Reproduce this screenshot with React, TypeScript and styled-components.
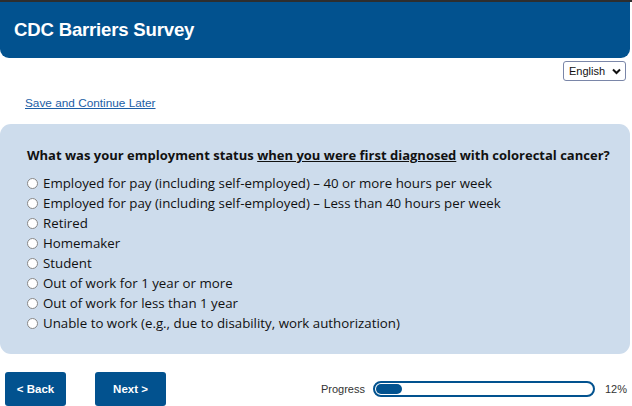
import React from "react";
import styled, { createGlobalStyle } from "styled-components";

const Global = createGlobalStyle`
  html, body { margin: 0; padding: 0; background: #fff; }
  body { font-family: "Liberation Sans", Arial, sans-serif; }
`;

const Page = styled.div`
  width: 632px;
  height: 406px;
  overflow: hidden;
  border-top: 2px solid #2e2e2e;
  box-sizing: border-box;
`;

const Header = styled.header`
  height: 56px;
  margin-right: 2px;
  background: #02528f;
  border-radius: 0 0 9px 9px;
  display: flex;
  align-items: center;
  padding-left: 14px;
`;

const Title = styled.h1`
  margin: 0;
  color: #fff;
  font-size: 18.6px;
  font-weight: bold;
  letter-spacing: -0.2px;
`;

const LangRow = styled.div`
  display: flex;
  justify-content: flex-end;
  padding: 3px 6px 0 0;
`;

const LangSelect = styled.div`
  width: 63px;
  height: 20px;
  box-sizing: border-box;
  border: 1px solid #7a86a8;
  border-radius: 3px;
  display: flex;
  align-items: center;
  justify-content: space-between;
  padding: 0 4px 0 5px;
  font-size: 11px;
  color: #111;
`;

const SaveLink = styled.a`
  display: block;
  margin: 15px 0 0 25px;
  font-size: 11.8px;
  color: #1c5ea6;
  text-decoration: underline;
  line-height: 14px;
`;

const Panel = styled.section`
  margin: 14px 2px 0 0;
  height: 230px;
  box-sizing: border-box;
  background: #cddcec;
  border-radius: 11px;
  padding: 21px 0 0 27px;
  font-family: "Open Sans", "Noto Sans", sans-serif;
  color: #111;
`;

const Question = styled.div`
  font-size: 13px;
  font-weight: bold;
  line-height: 20px;
  margin-bottom: 8px;
  white-space: nowrap;
  u { text-decoration: underline; }
`;

const Options = styled.div`
  display: flex;
  flex-direction: column;
`;

const Option = styled.label`
  display: flex;
  align-items: center;
  height: 20px;
  font-size: 13.3px;
  gap: 5px;
`;

const Radio = styled.span`
  width: 9px;
  height: 9px;
  border-radius: 50%;
  border: 1px solid #888;
  background: #fff;
  box-sizing: content-box;
`;

const Footer = styled.div`
  display: flex;
  align-items: center;
  margin-top: 18px;
  padding-left: 5px;
`;

const NavButton = styled.button<{ $w: number; $ml?: number }>`
  width: ${(p) => p.$w}px;
  height: 34px;
  margin-left: ${(p) => p.$ml ?? 0}px;
  background: #02528f;
  color: #fff;
  border: none;
  border-radius: 3px;
  font-family: "Liberation Sans", Arial, sans-serif;
  font-weight: bold;
  font-size: 11.5px;
  padding: 0;
`;

const Progress = styled.div`
  margin-left: auto;
  display: flex;
  align-items: center;
  font-size: 11px;
  color: #333;
  padding-right: 5px;
`;

const Track = styled.div`
  width: 222px;
  height: 16px;
  box-sizing: border-box;
  border: 2px solid #02528f;
  border-radius: 8px;
  margin: 0 10px 0 8px;
  padding: 1px;
  background: #fff;
`;

const Fill = styled.div`
  height: 100%;
  border-radius: 6px;
  background: #02528f;
`;

const options = [
  "Employed for pay (including self-employed) \u2013 40 or more hours per week",
  "Employed for pay (including self-employed) \u2013 Less than 40 hours per week",
  "Retired",
  "Homemaker",
  "Student",
  "Out of work for 1 year or more",
  "Out of work for less than 1 year",
  "Unable to work (e.g., due to disability, work authorization)",
];

export default function App() {
  const pct = 12;
  return (
    <Page>
      <Global />
      <Header>
        <Title>CDC Barriers Survey</Title>
      </Header>
      <LangRow>
        <LangSelect>
          <span>English</span>
          <svg width="9" height="7" viewBox="0 0 9 7">
            <path d="M1 1.5 L4.5 5 L8 1.5" stroke="#111" strokeWidth="2" fill="none" />
          </svg>
        </LangSelect>
      </LangRow>
      <SaveLink href="#">Save and Continue Later</SaveLink>
      <Panel>
        <Question>
          What was your employment status <u>when you were first diagnosed</u> with colorectal cancer?
        </Question>
        <Options>
          {options.map((o) => (
            <Option key={o}>
              <Radio />
              {o}
            </Option>
          ))}
        </Options>
      </Panel>
      <Footer>
        <NavButton $w={61}>&lt; Back</NavButton>
        <NavButton $w={71} $ml={29}>Next &gt;</NavButton>
        <Progress>
          Progress
          <Track>
            <Fill style={{ width: `${pct}%` }} />
          </Track>
          {pct}%
        </Progress>
      </Footer>
    </Page>
  );
}
